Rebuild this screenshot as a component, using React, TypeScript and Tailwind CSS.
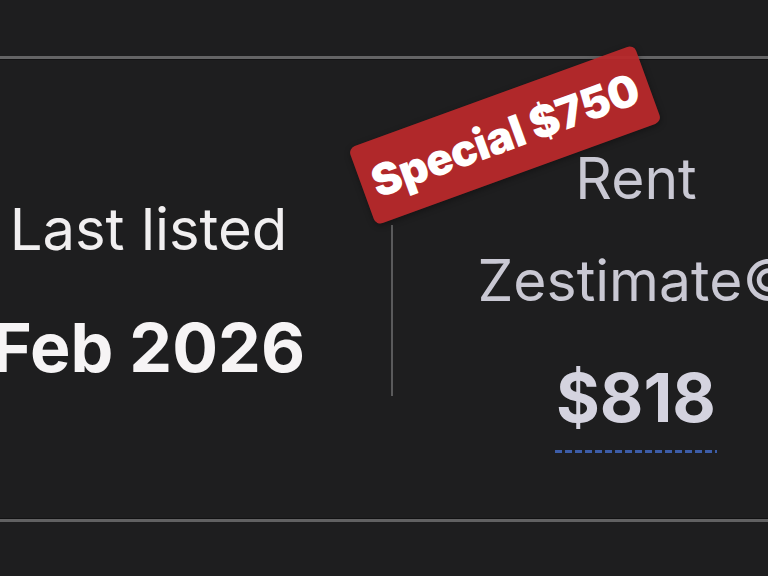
const App: React.FC = () => {
  return (
    <div className="relative h-[576px] w-[768px] overflow-hidden bg-[#1e1e1f] font-['Inter',sans-serif]">
      {/* top rule */}
      <div className="h-[56px]" />
      <div className="h-[3px] bg-[#646465] shadow-[0_1px_0_#121213]" />

      {/* facts row */}
      <div className="ml-[-94px] flex h-[460px]">
        {/* Last listed */}
        <div className="flex w-[485px] shrink-0 flex-col items-center pt-[141px]">
          <p className="text-[58px] leading-none text-[#f1eff0]">Last listed</p>
          <p className="mt-[55px] text-[68px] font-bold leading-none text-[#f6f4f5]">Feb 2026</p>
        </div>

        <div className="mt-[166px] h-[171px] w-[2px] shrink-0 self-start bg-[#5a5a5b]" />

        {/* Rent Zestimate */}
        <div className="flex w-[486px] shrink-0 flex-col items-center pt-[91px]">
          <p className="text-[57px] leading-none text-[#c9c8d3]">Rent</p>
          <p className="mt-[45px] whitespace-nowrap text-[57px] leading-none text-[#c9c8d3]">
            Zestimate©
          </p>
          <p className="mt-[55px] text-[67px] font-bold leading-none text-[#d4d3df]">$818</p>
          <div className="mt-[19px] h-[3px] w-[162px] bg-[repeating-linear-gradient(90deg,#3d5da8_0_7px,transparent_7px_10px)]" />
        </div>
      </div>

      {/* bottom rule */}
      <div className="h-[3px] bg-[#616162] shadow-[0_-1px_0_#121213]" />

      {/* special price tag */}
      <div className="absolute left-[353px] top-[94px] flex h-[82px] w-[304px] -rotate-[20deg] items-center justify-center rounded-[7px] bg-[#b8292b]/95 shadow-[0_2px_6px_rgba(0,0,0,0.35)]">
        <span className="whitespace-nowrap text-[44px] font-black leading-none tracking-[-0.5px] text-white">
          Special $750
        </span>
      </div>
    </div>
  );
};

export default App;
